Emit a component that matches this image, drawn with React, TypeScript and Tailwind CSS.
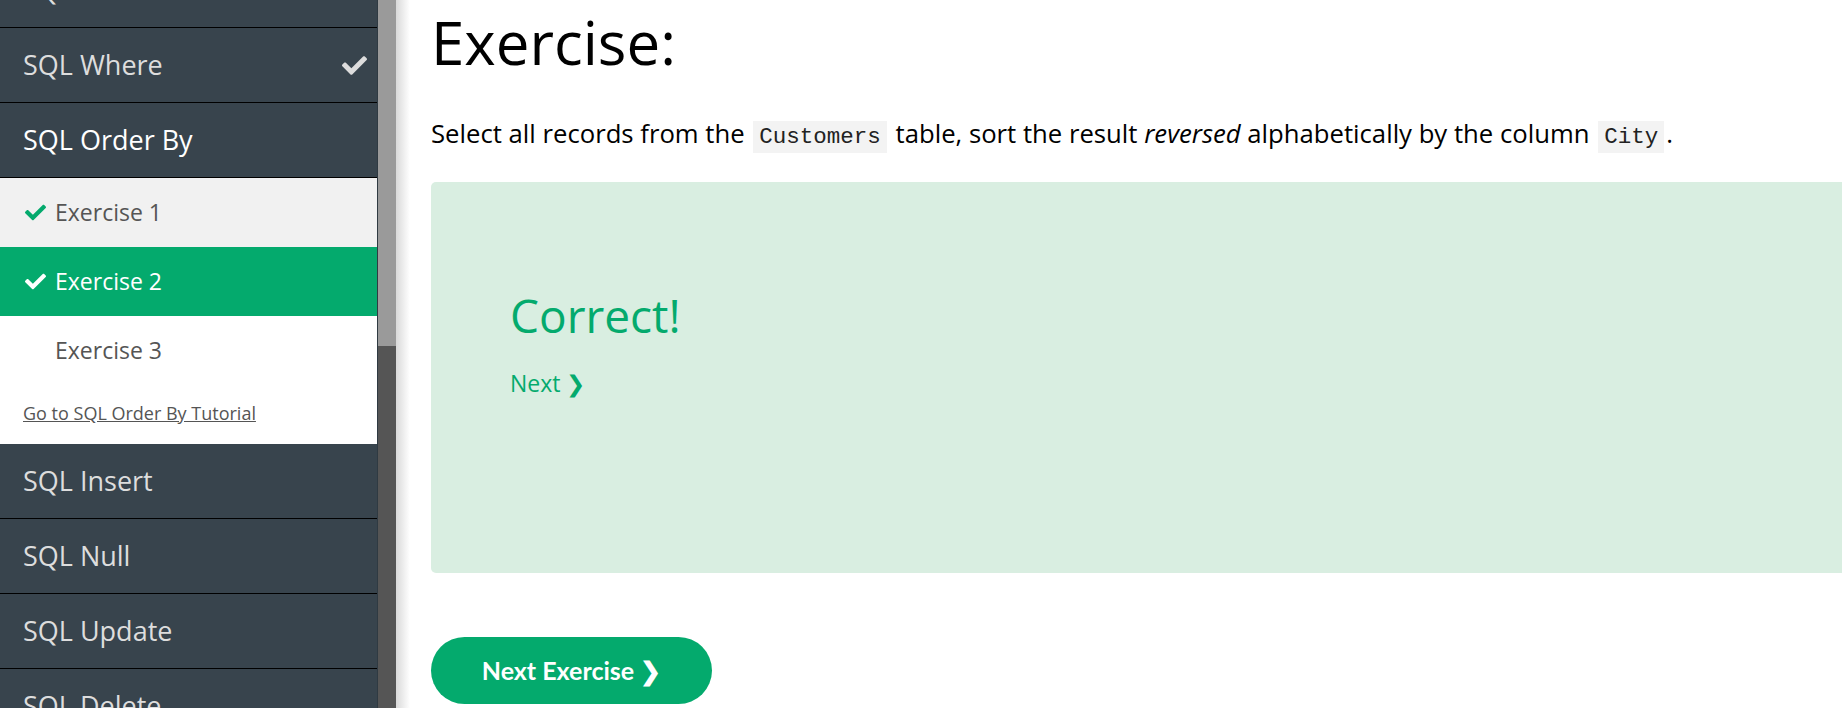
import React from "react";
import { FaCheck } from "react-icons/fa";

type Row = { label: string; done?: boolean; active?: boolean };

const topRows: Row[] = [
  { label: "SQL Select", done: true },
  { label: "SQL Where", done: true },
  { label: "SQL Order By", active: true },
];

const bottomRows: Row[] = [
  { label: "SQL Insert" },
  { label: "SQL Null" },
  { label: "SQL Update" },
  { label: "SQL Delete" },
];

const exercises = [
  { label: "Exercise 1", done: true, current: false },
  { label: "Exercise 2", done: true, current: true },
  { label: "Exercise 3", done: false, current: false },
];

function ChapterRow({ label, done, active }: Row) {
  return (
    <div className="flex items-center justify-between h-[75px] border-b border-black pl-[23px] pr-[10px]">
      <span
        className={
          "text-[27px] " + (active ? "text-white" : "text-[#dddddd]")
        }
      >
        {label}
      </span>
      {done && <FaCheck className="w-[25px] h-[25px] text-[#dddddd]" />}
    </div>
  );
}

function Sidebar() {
  return (
    <aside className="w-[377px] shrink-0 bg-[#38444d] overflow-hidden">
      <div className="-mt-[47px]">
        {topRows.map((r) => (
          <ChapterRow key={r.label} {...r} />
        ))}
        <div className="bg-white">
          {exercises.map((ex) => (
            <div
              key={ex.label}
              className={
                "flex items-center h-[69px] pl-[25px] text-[23px] " +
                (ex.current
                  ? "bg-[#04aa6d] text-white"
                  : ex.done
                  ? "bg-[#f1f1f1] text-[#555555]"
                  : "bg-white text-[#555555]")
              }
            >
              <span className="w-[30px] flex">
                {ex.done && (
                  <FaCheck
                    className={
                      "w-[21px] h-[21px] " +
                      (ex.current ? "text-white" : "text-[#04aa6d]")
                    }
                  />
                )}
              </span>
              <span>{ex.label}</span>
            </div>
          ))}
          <div className="h-[59px] pl-[23px] pt-[16px]">
            <a className="text-[18px] leading-[24px] text-[#555555] underline">
              Go to SQL Order By Tutorial
            </a>
          </div>
        </div>
        {bottomRows.map((r) => (
          <ChapterRow key={r.label} {...r} />
        ))}
      </div>
    </aside>
  );
}

function Scrollbar() {
  return (
    <div className="w-[19px] shrink-0 flex flex-col border-l border-[#2f3a42]">
      <div className="h-[346px] bg-[#9a9a9a]" />
      <div className="flex-1 bg-[#555555]" />
    </div>
  );
}

function Code({ children }: { children: React.ReactNode }) {
  return (
    <code className="bg-[#f3f3f3] text-[#222] px-[6px] py-[3px] mx-[2px] text-[22.5px] leading-[22px] font-['Liberation_Mono',monospace]">
      {children}
    </code>
  );
}

export default function App() {
  return (
    <div className="flex h-[708px] w-[1842px] overflow-hidden bg-white font-['Open_Sans',sans-serif]">
      <Sidebar />
      <Scrollbar />
      <div className="w-[14px] shrink-0 bg-linear-to-r from-[#d9d9d9] to-white" />
      <main className="flex-1 pl-[21px] min-w-0">
        <h1 className="mt-[10px] text-[60px] leading-[64px] text-black">
          Exercise:
        </h1>
        <p className="mt-[44px] text-[25.7px] leading-[32px] text-black whitespace-nowrap">
          Select all records from the <Code>Customers</Code> table, sort the
          result <i>reversed</i> alphabetically by the column <Code>City</Code>.
        </p>
        <div className="mt-[32px] h-[391px] bg-[#d9eee1] rounded-l-[5px] pl-[79px] pt-[105px]">
          <div className="text-[46px] leading-[56px] text-[#04aa6d]">
            Correct!
          </div>
          <div className="mt-[25px] text-[23px] leading-[30px] text-[#04aa6d]">
            Next ❯
          </div>
        </div>
        <button className="mt-[64px] w-[281px] h-[67px] rounded-full bg-[#04aa6d] text-white text-[25px] font-bold font-['Lato',sans-serif]">
          Next Exercise ❯
        </button>
      </main>
    </div>
  );
}
